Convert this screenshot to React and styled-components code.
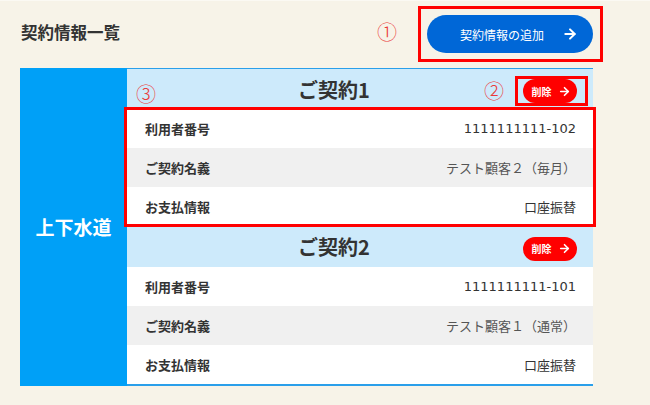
import React from 'react';
import styled, { createGlobalStyle } from 'styled-components';
import { ArrowRight } from 'lucide-react';

const GlobalStyle = createGlobalStyle`
  html, body {
    margin: 0;
    padding: 0;
    background: #f7f3e8;
  }
  body {
    font-family: "Noto Sans CJK JP", "Noto Sans", sans-serif;
    color: #333;
  }
`;

const contracts = [
  {
    id: 1,
    title: 'ご契約1',
    rows: [
      { label: '利用者番号', value: '1111111111-102', kind: 'number' },
      { label: 'ご契約名義', value: 'テスト顧客２（毎月）', kind: 'muted' },
      { label: 'お支払情報', value: '口座振替' },
    ],
  },
  {
    id: 2,
    title: 'ご契約2',
    rows: [
      { label: '利用者番号', value: '1111111111-101', kind: 'number' },
      { label: 'ご契約名義', value: 'テスト顧客１（通常）', kind: 'muted' },
      { label: 'お支払情報', value: '口座振替' },
    ],
  },
];

const Page = styled.div`
  width: 650px;
  height: 405px;
  box-sizing: border-box;
  padding: 14px 57px 0 20px;
  border-top: 1px solid #fbf9f3;
`;

const TopBar = styled.div`
  display: flex;
  align-items: center;
  justify-content: space-between;
  height: 38px;
  margin-bottom: 15px;
`;

const PageTitle = styled.h1`
  margin: 0 0 4px 1px;
  font-size: 16.5px;
  font-weight: 700;
  color: #333;
  letter-spacing: 0;
`;

const AddWrap = styled.div`
  position: relative;
`;

const AddButton = styled.button`
  display: flex;
  align-items: center;
  justify-content: center;
  gap: 18px;
  width: 166px;
  height: 38px;
  padding: 0 10px 0 28px;
  border: none;
  border-radius: 19px;
  background: #0067d7;
  color: #fff;
  font-family: inherit;
  font-size: 12px;
  cursor: pointer;
`;

const Highlight = styled.div`
  position: absolute;
  top: ${p => p.$t}px;
  right: ${p => p.$r}px;
  bottom: ${p => p.$b}px;
  left: ${p => p.$l}px;
  border: 3px solid #ff0000;
  pointer-events: none;
  z-index: 2;
`;

const Mark = styled.span`
  position: absolute;
  top: ${p => p.$t}px;
  left: ${p => p.$l}px;
  font-size: 20px;
  line-height: 20px;
  font-weight: 300;
  color: #ea3a3a;
`;

const Panel = styled.div`
  display: flex;
  width: 573px;
`;

const Category = styled.div`
  display: flex;
  align-items: center;
  justify-content: center;
  width: 107px;
  flex-shrink: 0;
  background: #00a0f7;
  color: #fff;
  font-size: 19px;
  font-weight: 700;
  padding-bottom: 2px;
`;

const Contracts = styled.div`
  flex: 1;
  border-top: 1px solid #2a9fea;
  border-bottom: 2px solid #2a9fea;
`;

const ContractHead = styled.div`
  position: relative;
  display: flex;
  align-items: center;
  height: ${p => p.$h}px;
  padding: 0 16px 0 18px;
  background: #cdeafb;
`;

const ContractTitle = styled.h2`
  flex: 1;
  margin: 0;
  text-align: center;
  font-size: 20px;
  font-weight: 700;
  color: #333;
`;

const DeleteButton = styled.button`
  display: flex;
  align-items: center;
  justify-content: center;
  gap: 6px;
  width: 54px;
  height: 24px;
  margin-top: 4px;
  padding: 0 0 0 2px;
  border: none;
  border-radius: 12px;
  background: #ff0000;
  color: #fff;
  font-family: inherit;
  font-size: 10px;
  font-weight: 700;
  cursor: pointer;
`;

const Rows = styled.div`
  position: relative;
`;

const Row = styled.div`
  display: flex;
  align-items: center;
  justify-content: space-between;
  height: 39px;
  padding: 0 17px 0 18px;
  background: ${p => (p.$striped ? '#f0f0f0' : '#fff')};
  font-size: 13px;
`;

const Label = styled.span`
  font-weight: 700;
  color: #333;
`;

const Value = styled.span`
  font-family: ${p => (p.$kind === 'number' ? '"DejaVu Sans", sans-serif' : 'inherit')};
  font-size: 13px;
  color: ${p => (p.$kind === 'muted' ? '#555' : '#333')};
`;

const Contract = ({ contract, first }) => (
  <>
    <ContractHead $h={first ? 40 : 41}>
      {first && <Mark $t={15} $l={9}>③</Mark>}
      {first && <Mark $t={12} $l={357}>②</Mark>}
      <ContractTitle>{contract.title}</ContractTitle>
      <DeleteButton>
        削除
        <ArrowRight size={13} strokeWidth={3} />
      </DeleteButton>
      {first && <Highlight $t={7} $r={5} $b={3} $l={388} />}
    </ContractHead>
    <Rows>
      {contract.rows.map((row, i) => (
        <Row key={row.label} $striped={i === 1}>
          <Label>{row.label}</Label>
          <Value $kind={row.kind}>{row.value}</Value>
        </Row>
      ))}
      {first && <Highlight $t={-2} $r={-3} $b={-1} $l={-3} />}
    </Rows>
  </>
);

const App = () => (
  <Page>
    <GlobalStyle />
    <TopBar>
      <PageTitle>契約情報一覧</PageTitle>
      <AddWrap>
        <Mark $t={7} $l={-50}>①</Mark>
        <AddButton>
          契約情報の追加
          <ArrowRight size={16} strokeWidth={3} />
        </AddButton>
        <Highlight $t={-9} $r={-10} $b={-9} $l={-9} />
      </AddWrap>
    </TopBar>
    <Panel>
      <Category>上下水道</Category>
      <Contracts>
        {contracts.map((c, i) => (
          <Contract key={c.id} contract={c} first={i === 0} />
        ))}
      </Contracts>
    </Panel>
  </Page>
);

export default App;
